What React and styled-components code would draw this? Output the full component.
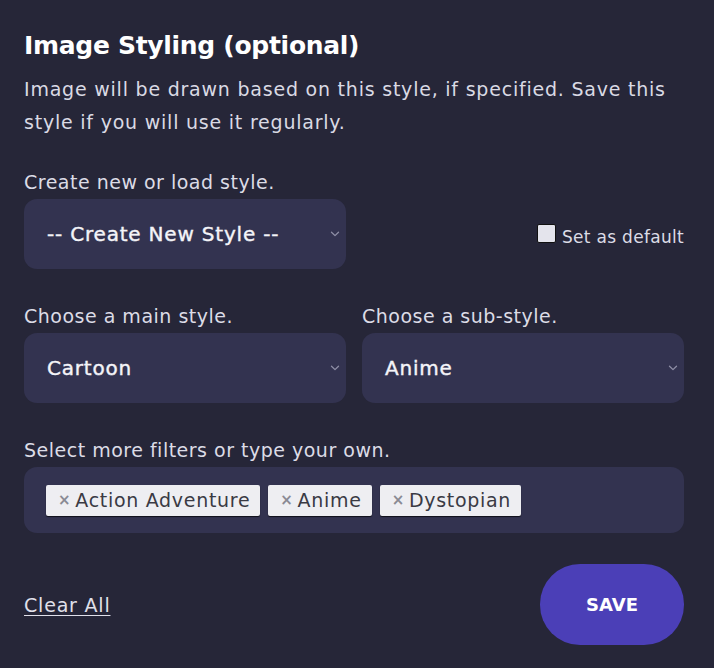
import styled, { createGlobalStyle } from 'styled-components'

const GlobalStyle = createGlobalStyle`
  html, body {
    margin: 0;
    padding: 0;
    background: #262638;
  }
  * { box-sizing: border-box; }
`

const tags = ['Action Adventure', 'Anime', 'Dystopian']

function Chevron() {
  return (
    <svg width="10" height="6" viewBox="0 0 10 6" fill="none">
      <path d="M1.5 1.2 L5 4.6 L8.5 1.2" stroke="#8e8ea6" strokeWidth="1.3" strokeLinecap="round" strokeLinejoin="round" />
    </svg>
  )
}

function Select({ value }) {
  return (
    <SelectBox>
      <span>{value}</span>
      <Chevron />
    </SelectBox>
  )
}

export default function App() {
  return (
    <Panel>
      <GlobalStyle />
      <Title>Image Styling (optional)</Title>
      <Description>
        Image will be drawn based on this style, if specified. Save this style if you will use it regularly.
      </Description>

      <Label>Create new or load style.</Label>
      <Row>
        <Select value="-- Create New Style --" />
        <CheckLabel>
          <CheckBox />
          Set as default
        </CheckLabel>
      </Row>

      <Row $gap="16px" $top="35px">
        <Field>
          <Label $flush>Choose a main style.</Label>
          <Select value="Cartoon" />
        </Field>
        <Field>
          <Label $flush>Choose a sub-style.</Label>
          <Select value="Anime" />
        </Field>
      </Row>

      <Label $top="35px">Select more filters or type your own.</Label>
      <TagBox>
        {tags.map((tag) => (
          <Tag key={tag}>
            <TagX>×</TagX>
            {tag}
          </Tag>
        ))}
      </TagBox>

      <Footer>
        <ClearLink href="#">Clear All</ClearLink>
        <SaveButton>SAVE</SaveButton>
      </Footer>
    </Panel>
  )
}

const Panel = styled.div`
  width: 714px;
  height: 668px;
  padding: 30px 30px 0 24px;
  background: #262638;
  font-family: "DejaVu Sans", "Open Sans", sans-serif;
  letter-spacing: 0.5px;
  color: #e6e6ee;
`

const Title = styled.h2`
  margin: 0;
  font-size: 25px;
  font-weight: 700;
  line-height: 32px;
  letter-spacing: -0.3px;
  color: #ffffff;
`

const Description = styled.p`
  margin: 11px 0 0;
  width: 672px;
  font-size: 19px;
  line-height: 33px;
  letter-spacing: 0.78px;
  color: #dadae4;
`

const Label = styled.div`
  margin-top: ${(p) => (p.$flush ? '0' : p.$top || '31px')};
  margin-bottom: 5px;
  font-size: 19px;
  line-height: 24px;
  color: #dcdce6;
`

const Row = styled.div`
  display: flex;
  align-items: center;
  justify-content: space-between;
  gap: ${(p) => p.$gap || '0'};
  margin-top: ${(p) => p.$top || '0'};
`

const Field = styled.div`
  display: flex;
  flex-direction: column;
  width: 322px;
`

const SelectBox = styled.div`
  width: 322px;
  height: 70px;
  border-radius: 13px;
  background: #333350;
  display: flex;
  align-items: center;
  justify-content: space-between;
  padding: 0 6px 0 23px;
  font-size: 20px;
  letter-spacing: 0.8px;
  -webkit-text-stroke: 0.4px #f4f4f8;
  color: #f4f4f8;
`

const CheckLabel = styled.label`
  display: flex;
  align-items: center;
  gap: 6px;
  margin-top: 6px;
  font-size: 17px;
  letter-spacing: 0.3px;
  color: #dcdce6;
`

const CheckBox = styled.span`
  display: inline-block;
  width: 19px;
  height: 19px;
  margin-top: -8px;
  background: #e4e4ec;
  border: 1px solid #111;
  border-radius: 2px;
`

const TagBox = styled.div`
  width: 660px;
  height: 66px;
  border-radius: 13px;
  background: #333350;
  display: flex;
  align-items: center;
  gap: 8px;
  padding: 0 22px;
`

const Tag = styled.span`
  display: inline-flex;
  align-items: center;
  gap: 4px;
  height: 31px;
  padding: 0 10px 0 12px;
  background: #eeeef2;
  border-radius: 2px;
  box-shadow: 0 1px 1px #10101a;
  font-size: 19px;
  letter-spacing: 0.7px;
  color: #3a3a44;
`

const TagX = styled.span`
  font-size: 15px;
  color: #8a8a94;
  font-weight: 700;
`

const Footer = styled.div`
  display: flex;
  align-items: center;
  justify-content: space-between;
  margin-top: 31px;
`

const ClearLink = styled.a`
  font-size: 19px;
  letter-spacing: 0.8px;
  color: #e0e0ea;
  text-decoration: underline;
  text-underline-offset: 3px;
`

const SaveButton = styled.button`
  width: 144px;
  height: 81px;
  border: none;
  border-radius: 40px;
  background: #4b3fb7;
  color: #ffffff;
  font-family: inherit;
  font-size: 18px;
  font-weight: 700;
  letter-spacing: 0;
  cursor: pointer;
`
